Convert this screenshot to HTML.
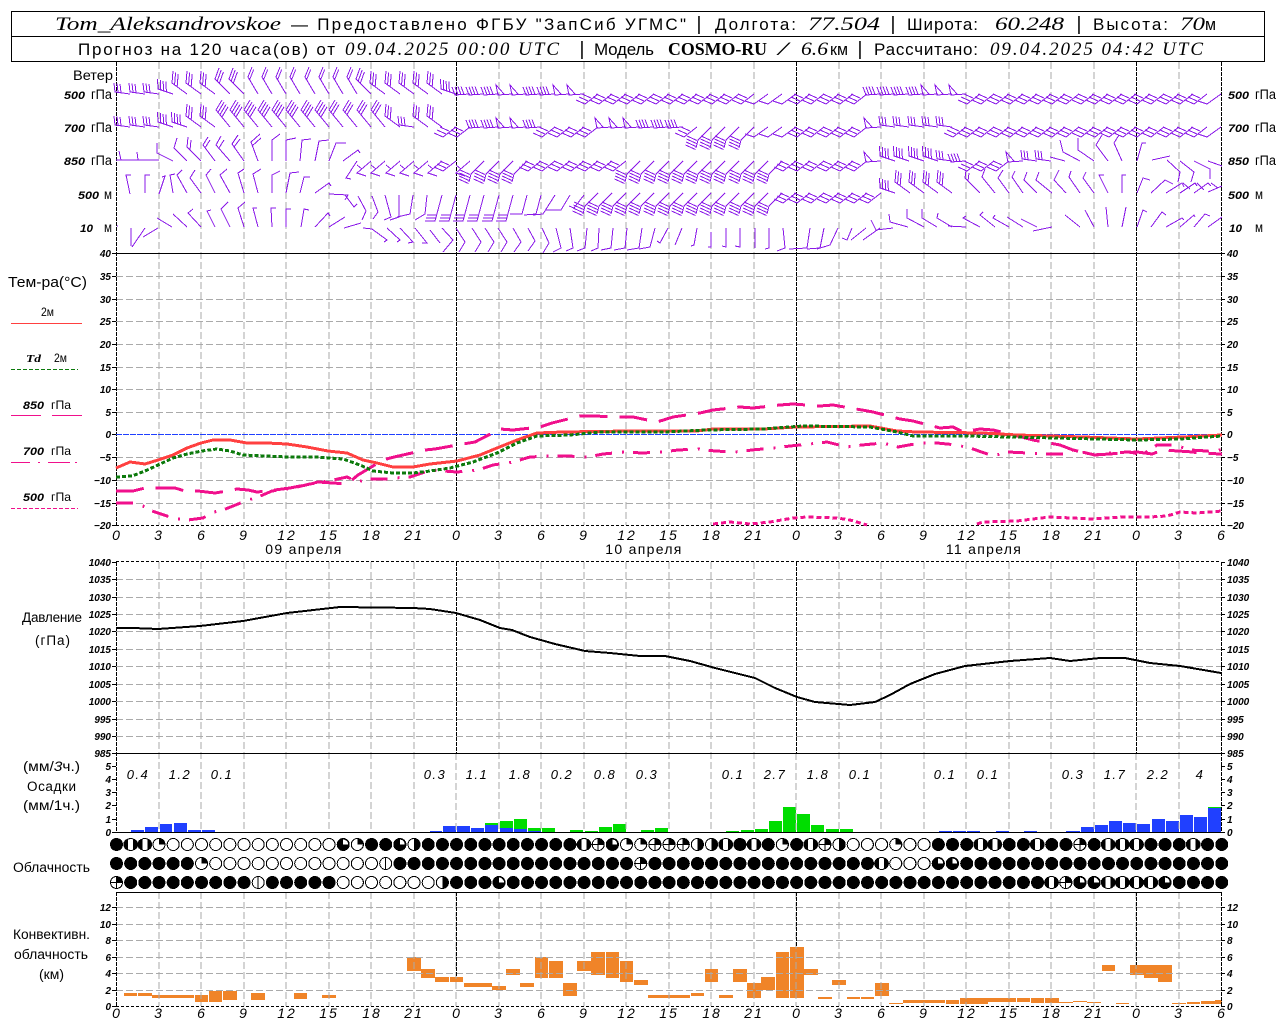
<!DOCTYPE html>
<html lang="ru"><head><meta charset="utf-8"><title>Tom_Aleksandrovskoe</title>
<style>
html,body{margin:0;padding:0;background:#fff}
svg{display:block}
text{font-family:"Liberation Sans","DejaVu Sans",sans-serif;fill:#000;stroke:none}
.h{font-size:17px}.hi{font-family:"Liberation Serif",serif;font-style:italic;font-size:19px}
.hb{font-family:"Liberation Serif",serif;font-weight:bold;font-size:18px}
.b{font-size:19px}
.l{font-size:13.5px}.li{font-size:11px;font-style:italic;font-weight:bold}
.n{font-size:10px;font-style:italic;font-weight:bold}
.e{text-anchor:end}
.x{font-size:14px;font-style:italic;text-anchor:middle;letter-spacing:2px}
.p{font-size:13px;font-style:italic;text-anchor:middle;letter-spacing:1.5px}
.d{font-size:14px;text-anchor:middle;letter-spacing:1.3px}
.w{fill:none;stroke:#8a18e8;stroke-width:1}
</style></head><body>
<svg width="1280" height="1024" viewBox="0 0 1280 1024" xmlns="http://www.w3.org/2000/svg" shape-rendering="crispEdges">
<defs>
<path id="A" d="M0 0L-15-2l-1-9m4 9.4l-1-9m4 9.4l-1-9"/>
<path id="B" d="M0 0L-15-5l-.5-10m3.3 10.9l-.5-10m3.3 10.9l-.5-10m3.3 10.9l-.5-10"/>
<path id="C" d="M0 0L-15-11l1-12m1.6 13.5l1-12m1.6 13.5l1-12"/>
<path id="D" d="M0 0L-15-15l4-11m-1.8 13l4-11m-1.8 13l4-11"/>
<path id="E" d="M0 0L-10-17l4-10m-2.3 12.500l4-10"/>
<path id="F" d="M0 0L-14-17l6-10m-4 12.300l6-10m-4 12.300l6-10m-4 12.300l6-10"/>
<path id="G" d="M0 0L-14-17l6-10m-4 12.300l6-10m-4 12.300l6-10"/>
<path id="H" d="M0 0L-15 1l-3-8m6 7.8l-3-8m6 7.8l-3-8m6 7.8l-3-8"/>
<path id="P" d="M0 0L-15 1l-2-10 8 9"/>
<path id="Y" d="M0 0L-13 10l-9-4m12 1l-9-4m12 1l-9-4"/>
<path id="y" d="M0 0L-14 10l-9-3"/>
<path id="Z" d="M0 0L-13 13l-2 8M-24 9l10 4.500M-24.500 12l10 4.500M-25 15l10 4.500M-25.500 18l10 4.500"/>
<path id="z" d="M0 0L-14 12l9 3M-9 8l-5-4"/>
<path id="W" d="M0 0L-7 26h-10M-6 23h-10M-5 20h-10"/>
<g id="ce"><circle r="6" fill="#fff" stroke="#000"/></g>
<g id="cq"><circle r="6" fill="#fff" stroke="#000"/><path d="M0 0V-6A6 6 0 0 1 6 0z" fill="#000"/></g>
<g id="ct"><circle r="6.5" fill="#000"/><path d="M0 0V-5A5 5 0 0 1 5 0z" fill="#fff"/></g>
<g id="cs"><circle r="6" fill="#fff" stroke="#000"/><path d="M-2.5-5.9A6 6 0 0 0-2.5 5.9zM2.5-5.9A6 6 0 0 1 2.5 5.9z" fill="#000"/></g>
<g id="cr"><circle r="6" fill="#fff" stroke="#000"/><path d="M0-6A6 6 0 0 1 0 6z" fill="#000"/></g>
<g id="cx"><circle r="6" fill="#fff" stroke="#000"/><path d="M0-6V6M-6 0H6" stroke="#000" fill="none"/><path d="M0 0V-6A6 6 0 0 1 6 0z" fill="#000"/></g>
<g id="cv"><circle r="6" fill="#fff" stroke="#000"/><path d="M0-6V6" stroke="#000"/></g>
</defs>

<!-- header -->
<path d="M11.5 11.5H1264.5V61.5H11.5ZM11.5 36.5H1264.5" fill="none" stroke="#000"/>
<text class="hi" x="55" y="30" textLength="226" lengthAdjust="spacingAndGlyphs">Tom_Aleksandrovskoe</text>
<text class="h" x="291" y="30" textLength="395" lengthAdjust="spacing">— Предоставлено ФГБУ "ЗапСиб УГМС"</text>
<text class="b" x="696.500" y="30">|</text>
<text class="h" x="715" y="30" textLength="81">Долгота:</text>
<text class="hi" x="808" y="30" textLength="72" lengthAdjust="spacingAndGlyphs">77.504</text>
<text class="b" x="890.500" y="30">|</text>
<text class="h" x="907" y="30" textLength="71">Широта:</text>
<text class="hi" x="995" y="30" textLength="69" lengthAdjust="spacingAndGlyphs">60.248</text>
<text class="b" x="1076.500" y="30">|</text>
<text class="h" x="1093" y="30" textLength="75">Высота:</text>
<text class="hi" x="1180" y="30" textLength="25" lengthAdjust="spacingAndGlyphs">70</text>
<text class="h" x="1205" y="30" textLength="11" lengthAdjust="spacingAndGlyphs">м</text>
<text class="h" x="78" y="55" textLength="257">Прогноз на 120 часа(ов) от</text>
<text class="hi" x="345" y="55" textLength="214" lengthAdjust="spacing">09.04.2025 00:00 UTC</text>
<text class="b" x="579.500" y="55">|</text>
<text class="h" x="594" y="55" textLength="60">Модель</text>
<text class="hb" x="668" y="55" textLength="99" lengthAdjust="spacingAndGlyphs">COSMO-RU</text>
<text class="hi" x="778" y="55" textLength="10" lengthAdjust="spacingAndGlyphs">/</text>
<text class="hi" x="801" y="55" textLength="27" lengthAdjust="spacingAndGlyphs">6.6</text>
<text class="h" x="830" y="55" textLength="18" lengthAdjust="spacingAndGlyphs">км</text>
<text class="b" x="857.500" y="55">|</text>
<text class="h" x="874" y="55" textLength="104">Рассчитано:</text>
<text class="hi" x="990" y="55" textLength="213" lengthAdjust="spacing">09.04.2025 04:42 UTC</text>

<!-- precip bars -->
<path fill="#2040ff" d="M131 830h13v2h-13zM145 827h13v5h-13zM160 824h12v8h-12zM174 823h13v9h-13zM188 830h13v2h-13zM202 830h13v2h-13zM430 831h12v1h-12zM443 826h13v6h-13zM457 826h13v6h-13zM471 828h13v4h-13zM485 825h13v7h-13zM500 828h13v4h-13zM514 829h13v3h-13zM528 831h13v1h-13zM939 831h13v1h-13zM953 831h13v1h-13zM967 831h13v1h-13zM996 831h13v1h-13zM1024 831h13v1h-13zM1066 831h14v1h-14zM1081 827h13v5h-13zM1095 825h13v7h-13zM1109 821h13v11h-13zM1123 823h13v9h-13zM1137 824h13v8h-13zM1152 819h13v13h-13zM1166 821h13v11h-13zM1180 815h13v17h-13zM1194 817h13v15h-13zM1208 808h13v24h-13z"/>
<path fill="#00dd00" d="M485 823h13v2h-13zM500 821h13v7h-13zM514 819h13v10h-13zM528 828h13v3h-13zM542 828h13v4h-13zM570 830h13v2h-13zM585 831h13v1h-13zM599 827h13v5h-13zM613 824h13v8h-13zM641 830h13v2h-13zM655 828h13v4h-13zM726 831h13v1h-13zM741 830h13v2h-13zM755 829h13v3h-13zM769 821h13v11h-13zM783 807h13v25h-13zM797 814h13v18h-13zM811 825h13v7h-13zM826 829h13v3h-13zM840 829h13v3h-13zM1208 807h13v1h-13z"/>

<!-- conv bars -->
<path fill="#f08428" d="M124 993h13v3h-13zM138 993h14v3h-14zM152 995h42v3h-42zM195 995h13v7h-13zM209 991h13v11h-13zM223 991h14v9h-14zM251 993h14v7h-14zM294 993h13v6h-13zM322 995h14v3h-14zM407 957h14v14h-14zM421 969h14v9h-14zM435 977h14v5h-14zM450 977h13v5h-13zM464 983h28v4h-28zM492 986h14v4h-14zM506 969h14v6h-14zM520 983h14v4h-14zM535 957h13v21h-13zM549 961h14v17h-14zM563 983h14v13h-14zM577 961h14v10h-14zM591 952h14v23h-14zM606 952h13v26h-13zM620 961h13v21h-13zM634 980h14v5h-14zM648 995h42v3h-42zM691 993h13v3h-13zM705 969h13v13h-13zM719 995h14v3h-14zM733 969h14v13h-14zM747 983h14v15h-14zM761 977h14v13h-14zM776 952h13v46h-13zM790 947h14v51h-14zM804 969h14v6h-14zM818 997h14v2h-14zM832 980h14v5h-14zM847 997h13v2h-13zM861 997h13v2h-13zM875 983h14v13h-14zM889 1003h14v1h-14zM903 1000h42v3h-42zM946 1000h13v4h-13zM960 998h28v6h-28zM988 998h28v4h-28zM1017 998h13v4h-13zM1031 998h13v5h-13zM1045 998h14v5h-14zM1059 1002h14v1h-14zM1073 1001h14v1h-14zM1087 1002h14v1h-14zM1102 965h13v6h-13zM1116 1003h13v1h-13zM1130 965h14v10h-14zM1144 965h14v13h-14zM1158 965h14v17h-14zM1172 1003h14v1h-14zM1187 1002h13v2h-13zM1201 1001h14v3h-14zM1215 1000h7v4h-7z"/>

<!-- gray grid -->
<g fill="none" stroke="#aaa" stroke-dasharray="7 3">
<path d="M159 62V525M201 62V525M244 62V525M286 62V525M329 62V525M371 62V525M414 62V525M499 62V525M541 62V525M584 62V525M626 62V525M669 62V525M711 62V525M754 62V525M839 62V525M881 62V525M924 62V525M966 62V525M1009 62V525M1051 62V525M1094 62V525M1179 62V525"/>
<path d="M159 562V832M201 562V832M244 562V832M286 562V832M329 562V832M371 562V832M414 562V832M456 753V832M499 562V832M541 562V832M584 562V832M626 562V832M669 562V832M711 562V832M754 562V832M796 753V832M839 562V832M881 562V832M924 562V832M966 562V832M1009 562V832M1051 562V832M1094 562V832M1136 753V832M1179 562V832"/>
<path d="M159 892V1006M201 892V1006M244 892V1006M286 892V1006M329 892V1006M371 892V1006M414 892V1006M456 892V1006M499 892V1006M541 892V1006M584 892V1006M626 892V1006M669 892V1006M711 892V1006M754 892V1006M796 892V1006M839 892V1006M881 892V1006M924 892V1006M966 892V1006M1009 892V1006M1051 892V1006M1094 892V1006M1136 892V1006M1179 892V1006"/>
<path d="M116 276.500H1221M116 299.500H1221M116 321.500H1221M116 344.500H1221M116 367.500H1221M116 389.500H1221M116 412.500H1221M116 457.500H1221M116 480.500H1221M116 503.500H1221"/>
<path d="M116 579.500H1221M116 597.500H1221M116 614.500H1221M116 631.500H1221M116 649.500H1221M116 666.500H1221M116 684.500H1221M116 701.500H1221M116 719.500H1221M116 736.500H1221"/>
<path d="M116 907.500H1221M116 924.500H1221M116 940.500H1221M116 957.500H1221M116 973.500H1221M116 990.500H1221"/>
</g>

<!-- black axes -->
<g fill="none" stroke="#000">
<path stroke-dasharray="4 1" d="M116.500 62V525M1221.500 62V525M116.500 562V832M1221.500 562V832M116.500 892V1006M1221.500 892V1006M456.500 62V525M796.500 62V525M1136.500 62V525M456.500 562V753M796.500 562V753M1136.500 562V753M456.500 892V977M796.500 892V947M1136.500 892V965"/>
<path d="M116 253.500H1221M116 753.500H1221M116 832.500H1221M116 892.500H1221"/>
<path stroke-dasharray="3 2" d="M116 525.500H1221M116 561.500H1221M116 1006.500H1221"/>
<path d="M112 253.500h4M112 276.500h4M112 299.500h4M112 321.500h4M112 344.500h4M112 367.500h4M112 389.500h4M112 412.500h4M112 434.500h4M112 457.500h4M112 480.500h4M112 503.500h4M112 525.500h4M112 562.500h4M112 579.500h4M112 597.500h4M112 614.500h4M112 631.500h4M112 649.500h4M112 666.500h4M112 684.500h4M112 701.500h4M112 719.500h4M112 736.500h4M112 753.500h4M112 766.500h4M112 779.500h4M112 792.500h4M112 805.500h4M112 819.500h4M112 832.500h4M112 907.500h4M112 924.500h4M112 940.500h4M112 957.500h4M112 973.500h4M112 990.500h4M112 1006.500h4"/>
<path d="M1221 253.500h4M1221 276.500h4M1221 299.500h4M1221 321.500h4M1221 344.500h4M1221 367.500h4M1221 389.500h4M1221 412.500h4M1221 434.500h4M1221 457.500h4M1221 480.500h4M1221 503.500h4M1221 525.500h4M1221 562.500h4M1221 579.500h4M1221 597.500h4M1221 614.500h4M1221 631.500h4M1221 649.500h4M1221 666.500h4M1221 684.500h4M1221 701.500h4M1221 719.500h4M1221 736.500h4M1221 753.500h4M1221 766.500h4M1221 779.500h4M1221 792.500h4M1221 805.500h4M1221 819.500h4M1221 832.500h4M1221 907.500h4M1221 924.500h4M1221 940.500h4M1221 957.500h4M1221 973.500h4M1221 990.500h4M1221 1006.500h4"/>
</g>
<path d="M116 434.500H1221" stroke="#2040ff" stroke-dasharray="6 1" fill="none"/>

<!-- wind barbs -->
<g class="w">
<g transform="translate(0,94)">
<use href="#A" x="130"/><use href="#A" x="145"/><use href="#A" x="159"/><use href="#B" x="173"/><use href="#C" x="187"/><use href="#C" x="201"/><use href="#C" x="215"/><use href="#D" x="230"/><use href="#D" x="244"/><use href="#E" x="258"/><use href="#E" x="272"/><use href="#E" x="286"/><use href="#E" x="300"/><use href="#E" x="315"/><use href="#E" x="329"/><use href="#E" x="343"/><use href="#E" x="357"/><use href="#D" x="371"/><use href="#C" x="385"/><use href="#C" x="400"/><use href="#C" x="414"/><use href="#C" x="428"/><use href="#C" x="442"/><use href="#B" x="456"/><use href="#H" x="470"/><use href="#H" x="484"/><use href="#H" x="499"/><use href="#P" x="513"/><use href="#P" x="527"/><use href="#H" x="541"/><use href="#H" x="555"/><use href="#P" x="570"/><use href="#P" x="584"/>
<use href="#Y" x="598"/><use href="#Y" x="612"/><use href="#Y" x="626"/><use href="#Y" x="640"/><use href="#Y" x="654"/><use href="#Y" x="669"/><use href="#Y" x="683"/><use href="#Y" x="697"/><use href="#Y" x="711"/><use href="#Y" x="725"/><use href="#Y" x="739"/><use href="#Y" x="754"/><use href="#y" x="768"/><use href="#y" x="782"/><use href="#y" x="796"/><use href="#Y" x="810"/><use href="#Y" x="824"/><use href="#Y" x="839"/><use href="#Y" x="853"/><use href="#Y" x="867"/><use href="#H" x="881"/><use href="#H" x="895"/><use href="#H" x="909"/><use href="#H" x="924"/><use href="#P" x="938"/><use href="#P" x="952"/><use href="#P" x="966"/>
<use href="#Y" x="980"/><use href="#Y" x="994"/><use href="#Y" x="1009"/><use href="#Y" x="1023"/><use href="#Y" x="1037"/><use href="#Y" x="1051"/><use href="#Y" x="1065"/><use href="#Y" x="1079"/><use href="#Y" x="1094"/><use href="#Y" x="1108"/><use href="#Y" x="1122"/><use href="#Y" x="1136"/><use href="#Y" x="1150"/><use href="#Y" x="1164"/><use href="#Y" x="1179"/><use href="#Y" x="1193"/><use href="#Y" x="1207"/><use href="#y" x="1221"/>
</g>
<g transform="translate(0,127)">
<use href="#A" x="130"/><use href="#A" x="145"/><use href="#A" x="159"/><use href="#B" x="173"/><use href="#B" x="187"/><use href="#C" x="201"/><use href="#C" x="215"/><use href="#F" x="230"/><use href="#F" x="244"/><use href="#F" x="258"/><use href="#F" x="272"/><use href="#F" x="286"/><use href="#F" x="300"/><use href="#F" x="315"/><use href="#F" x="329"/><use href="#G" x="343"/><use href="#G" x="357"/><use href="#G" x="371"/><use href="#G" x="385"/><use href="#C" x="400"/><use href="#A" x="414"/><use href="#C" x="428"/><use href="#C" x="442"/><use href="#Y" x="456"/><use href="#Y" x="470"/><use href="#H" x="484"/><use href="#H" x="499"/><use href="#P" x="513"/><use href="#P" x="527"/><use href="#H" x="541"/><use href="#Y" x="555"/><use href="#Y" x="570"/><use href="#Y" x="584"/><use href="#Y" x="598"/><use href="#P" x="612"/><use href="#P" x="626"/><use href="#P" x="640"/><use href="#H" x="654"/><use href="#H" x="669"/><use href="#H" x="683"/><use href="#Y" x="697"/><use href="#Z" x="711"/><use href="#Z" x="725"/><use href="#Z" x="739"/><use href="#Z" x="754"/><use href="#y" x="768"/><use href="#y" x="782"/><use href="#y" x="796"/>
<use href="#Y" x="810"/><use href="#Y" x="824"/><use href="#Y" x="839"/><use href="#Y" x="853"/><use href="#Y" x="867"/><use href="#P" x="881"/><use href="#A" x="895"/><use href="#A" x="909"/><use href="#A" x="924"/><use href="#A" x="938"/><use href="#A" x="952"/><use href="#Y" x="966"/><use href="#Y" x="980"/><use href="#Y" x="994"/><use href="#Y" x="1009"/><use href="#Y" x="1023"/><use href="#Y" x="1037"/><use href="#Y" x="1051"/><use href="#Y" x="1065"/><use href="#Y" x="1079"/><use href="#Y" x="1094"/><use href="#Y" x="1108"/><use href="#Y" x="1122"/><use href="#Y" x="1136"/><use href="#Y" x="1150"/><use href="#Y" x="1164"/><use href="#Y" x="1179"/><use href="#Y" x="1193"/><use href="#Y" x="1207"/><use href="#y" x="1221"/>
</g>
<g transform="translate(0,161)">
<use href="#z" x="371"/><use href="#z" x="385"/><use href="#z" x="400"/><use href="#z" x="414"/><use href="#z" x="428"/><use href="#z" x="442"/><use href="#Y" x="456"/><use href="#z" x="470"/><use href="#Z" x="484"/><use href="#Z" x="499"/><use href="#Z" x="513"/><use href="#Z" x="527"/><use href="#Y" x="541"/><use href="#Y" x="555"/><use href="#Y" x="570"/><use href="#Y" x="584"/><use href="#Y" x="598"/><use href="#Y" x="612"/><use href="#Y" x="626"/><use href="#Z" x="640"/><use href="#Z" x="654"/><use href="#Z" x="669"/><use href="#Z" x="683"/><use href="#Z" x="697"/><use href="#Z" x="711"/><use href="#Z" x="725"/><use href="#Z" x="739"/><use href="#Z" x="754"/><use href="#Z" x="768"/><use href="#Z" x="782"/><use href="#Y" x="796"/><use href="#Y" x="810"/><use href="#Y" x="824"/><use href="#Y" x="839"/><use href="#Y" x="853"/><use href="#Y" x="867"/><use href="#P" x="881"/><use href="#B" x="895"/><use href="#B" x="909"/><use href="#B" x="924"/><use href="#B" x="938"/><use href="#A" x="952"/><use href="#H" x="966"/><use href="#Y" x="980"/><use href="#Y" x="994"/><use href="#Y" x="1009"/><use href="#P" x="1023"/><use href="#A" x="1037"/><use href="#A" x="1051"/>
</g>
<path d="M130 160l-14 0M121 160l-2-9M145 160l-15 0M138 160l-1-8M159 160H137M173 161L157 153V143M187 161L174 148l3-10M201 161L187 147l1-10M190 150l1-10M215 161L203 145l5-8M205 148l5-8M230 161L216 145l5-9M219 148l5-8M244 161L232 144l6-9M234 147l6-8M258 161L251 142l9-8M252 146l9-8M272 161V140l8-6M286 161V140l10-2M300 161L302 140l9-1M315 161L319 141l10-1M329 161L336 143h10M343 161L358 150l2 3M357 161L346 178l5 1M1065 161L1050 157M1080 161L1063 152l-3-12M1094 161L1078 150v-12M1108 161L1096 145l6-10M1122 161L1114 143l5-8M1137 161L1142 143l4 0M1152 160l18-4M1167 160l13 12-2 10M1180 161l14 11-3 10M1194 161l16 8v10M1208 161l14 5"/>
<g transform="translate(0,195)">
<use href="#W" x="442"/><use href="#W" x="456"/><use href="#W" x="470"/><use href="#W" x="484"/><use href="#W" x="499"/><use href="#W" x="513"/>
</g>
<g transform="translate(0,193)">
<use href="#Z" x="598"/><use href="#Z" x="612"/><use href="#Z" x="626"/><use href="#Z" x="640"/><use href="#Z" x="654"/><use href="#Z" x="669"/><use href="#Z" x="683"/><use href="#Z" x="697"/><use href="#Z" x="711"/><use href="#Z" x="725"/><use href="#Z" x="739"/><use href="#Z" x="754"/><use href="#Z" x="768"/><use href="#Z" x="782"/><use href="#Y" x="796"/><use href="#Y" x="810"/><use href="#Y" x="824"/><use href="#Y" x="839"/><use href="#Y" x="853"/><use href="#Y" x="867"/><use href="#Y" x="881"/><use href="#B" x="895"/><use href="#C" x="910"/><use href="#C" x="924"/><use href="#C" x="938"/><use href="#C" x="952"/>
</g>
<path d="M130 194l-4-19h5M145 193V175h5M159 194l6-18-3 1M173 193l-3-18 5-1M187 193L177 175l5-5M201 193L190 178l5-8M215 193L206 175l5-6M230 193L220 175l7-6M244 193L238 173l6-4M258 193L253 174l8-5M272 193V175l8-4M286 193L290 173l9-1M300 193L304 177h6M315 193L329 183l2 3M329 194L348 195l-3 5M345 195l9 12 3-3M358 196l8 15-4 9M372 196l6 16-5 7M385 195l6 22-7 3M399 195V217l-9 3M413 195l-3 19-13 3M427 195l-2 19-10 6M527 195l-5 19-12 0M541 195l-5 19-12 1M555 195l-12 19-10 1M570 195l-9 15-15 0M584 195l-10 13-5-2M980 193L965 178l1-8M968 181l1-8M995 193L982 177l3-8M1009 193L998 178l5-8M1023 193L1012 177l3-6M1037 193L1024 180l3-8M1052 193L1036 180l3-8M1066 193L1054 180l5-10M1080 193L1069 177l2-6M1094 193L1083 178l3-6M1108 193L1099 175l5 0M1122 193V175h4M1137 193L1143 178l7 2M1151 193L1165 180l8 4M1166 193L1182 183l2 4M1180 193L1195 183l2 3M1194 193L1208 183l3 3M1208 192L1222 186M1183 183l7 6M1197 183l7 7M1211 183l7 5"/>
<path d="M117 226h1M131 228V246M145 228L132 247M158 228L143 237M172 227L157 218M187 227L173 214M201 227L188 213l5-4M215 227L207 211l4-1M230 227L221 209l7-7M244 227L238 208l7-6M258 227L253 208h4M272 227L271 208h5M286 227V209h5M301 227L304 209l5 1M315 227L328 213l2 3M329 227L345 217M344 228L361 223M363 228L372 229M372 229l15 11-3 2M387 228l13 12-3 2M400 228l13 14-5 1M415 228l12 15-5 0M430 230l10 13M442 228l11 12-10 12M456 228l9 14-6 10M472 228l9 14-6 10M485 228l9 14-6 10M498 228l9 14-6 10M513 228l8 14-7 10M528 228l7 13-7 10M542 228l7 15-6 10M556 228l5 20-8 4M570 228l3 20-7 3M587 228l-2 20-8 3M599 228l-1 20-7 3M613 228l-2 20-10 2M627 228l-2 20-11 2M642 228l-3 20-12 2M655 228l-5 19-11 2M668 228l-8 15-3-2M682 228l-7 17M697 228l-3 17-3 1M711 232v15l-3 0M726 228v19l-4-1M740 228v19l-5-1M755 228v20M769 228v20l-4 1M783 228l2 20-8 3M810 228l-3 20-18 1M824 228l-4 20-13 1M838 228l-8 17-13 4M852 228l-5 12-5-2M866 228l-15 12M880 228l-17 12M893 228l-17 2-5-10M908 227l-18-5-1-8M924 227L907 218l0-9M937 227L922 218v-9M952 227L937 218l1-5M966 227L948 226M980 227L963 218l3-2M995 227L980 215l3-3M1009 227L993 218l2-3M1023 227L1007 217M1037 227L1021 219M1052 227L1033 231M1080 227L1065 215M1094 227L1085 210M1108 227L1106 207M1122 227L1126 207M1137 227L1143 210l4 2M1151 227L1162 212l4 3M1166 227L1182 218l2 2M1180 227L1194 215l1 2M1194 227L1205 214l5 2M1208 227L1222 217"/>
</g>

<!-- temperature curves -->
<g fill="none" stroke-width="3">
<polyline stroke="#f0108c" stroke-dasharray="28 12" points="116,491 133,491 145,488 157,488 175,488 185,491 198,491 215,493 227,491 237,489 248,490 257,492 267,491 290,488 310,484 318,482 333,483 347,484 358,475 383,460 394,457 425,450 435,449 463,444 475,442 500,429 513,430 540,427 552,423 580,416 593,416 620,417 633,417 657,422 673,417 700,413 713,410 740,407 753,408 780,405 793,404 820,406 833,405 850,408 862,410 873,412 900,419 913,421 940,428 953,427 963,432 980,429 993,430 1010,434 1033,440 1060,445 1073,450 1095,455 1137,452 1152,454 1163,450 1193,452 1197,453 1222,454"/>
<polyline stroke="#f0108c" stroke-dasharray="17 10 2 9" points="116,503 133,503 143,506 152,511 167,516 178,519 188,520 203,518 214,512 223,510 238,504 248,500 258,497 272,491 293,488 310,484 333,480 347,477 358,482 367,479 385,479 395,478 410,477 422,473 430,470 457,472 478,470 493,465 513,462 530,457 550,456 567,456 588,457 603,454 625,452 642,453 662,452 678,450 698,449 715,451 735,452 752,450 773,448 790,446 810,444 827,442 847,447 862,445 883,443 898,447 920,443 937,443 957,445 973,449 993,456 1008,452 1028,453 1047,454 1067,454 1073,450 1095,455 1107,453 1130,452 1142,455 1157,445 1175,445 1190,450 1207,451 1222,450"/>
<polyline stroke="#f0108c" stroke-dasharray="5 3" points="713,524 730,522 750,524 770,522 793,518 807,517 837,518 850,520 867,525"/>
<polyline stroke="#f0108c" stroke-dasharray="5 3" points="977,524 983,522 1017,521 1033,519 1050,517 1093,519 1123,517 1150,517 1167,516 1180,512 1197,513 1222,511"/>
<polyline stroke="#ff4040" points="116,468 130,462 145,464 158,460 173,455 187,448 201,443 213,440 230,440 247,443 267,443 287,444 307,447 328,451 347,453 363,460 377,463 393,467 413,467 430,464 457,461 480,455 497,448 517,440 537,433 563,432 630,431 697,431 713,429 763,429 797,427 870,426 897,431 917,432 983,433 1017,435 1083,437 1137,439 1183,437 1222,435"/>
<polyline stroke="#0c7a0c" stroke-dasharray="4 2" points="116,477 132,476 145,471 158,465 173,458 187,454 202,451 217,449 230,451 243,455 267,456 287,457 317,457 343,459 360,465 373,471 393,473 413,473 430,471 450,468 473,462 497,453 517,443 537,436 570,435 600,432 663,432 707,430 763,429 803,426 870,427 897,432 913,436 967,436 1010,437 1057,438 1137,440 1180,439 1222,436"/>
<!-- pressure -->
<polyline stroke="#000" stroke-width="2" points="116,628 133,628 158,629 200,626 243,621 287,613 340,607 413,608 430,609 456,613 480,620 500,628 512,630 530,637 555,644 585,651 610,653 640,656 665,656 690,661 715,668 755,678 775,688 797,697 815,702 850,705 875,702 890,695 910,684 935,674 965,666 1010,661 1050,658 1070,661 1100,658 1125,658 1150,663 1180,666 1221,673"/>
</g>

<!-- legend lines -->
<g fill="none">
<path stroke="#ff4040" d="M11 323.500H82"/>
<path stroke="#0c7a0c" stroke-dasharray="4 2" d="M11 369.500H78"/>
<path stroke="#f0108c" d="M11 415.500H41M52 415.500H82M11 462.500H30M38 462.500H40M48 462.500H70M75 462.500H77"/>
<path stroke="#f0108c" stroke-dasharray="4 2" d="M11 508.500H78"/>
</g>

<!-- clouds -->
<path d="M116.500 844.500H1222M116.500 863.500H1222M116.500 882.500H1222" fill="none" stroke="#000" stroke-width="13" stroke-linecap="round" stroke-dasharray="0 14.17"/>
<g transform="translate(0,844.5)">
<use href="#cs" x="130.700"/><use href="#cs" x="144.800"/><use href="#cq" x="159"/><use href="#ce" x="173.200"/><use href="#ce" x="187.300"/><use href="#ce" x="201.500"/><use href="#ce" x="215.700"/><use href="#ce" x="229.800"/><use href="#ce" x="244"/><use href="#ce" x="258.200"/><use href="#ce" x="272.300"/><use href="#ce" x="286.500"/><use href="#ce" x="300.700"/><use href="#ce" x="314.800"/><use href="#ce" x="329"/><use href="#ct" x="343.200"/><use href="#cq" x="357.300"/><use href="#ct" x="399.800"/><use href="#cr" x="414"/><use href="#cs" x="584"/><use href="#cx" x="598.200"/><use href="#ct" x="612.300"/><use href="#cq" x="626.500"/><use href="#cq" x="640.700"/><use href="#cx" x="654.800"/><use href="#cx" x="669"/><use href="#cx" x="683.200"/><use href="#cr" x="697.300"/><use href="#cr" x="711.500"/><use href="#cs" x="725.700"/><use href="#cs" x="754"/><use href="#cq" x="782.300"/><use href="#cs" x="810.700"/><use href="#cx" x="824.800"/><use href="#cr" x="839"/><use href="#ce" x="853.200"/><use href="#ce" x="867.300"/><use href="#ce" x="881.500"/><use href="#cq" x="895.700"/><use href="#ce" x="909.800"/><use href="#ce" x="924"/><use href="#cs" x="980.700"/><use href="#cs" x="994.800"/><use href="#cs" x="1037.300"/><use href="#cx" x="1079.800"/><use href="#cs" x="1108.200"/><use href="#cs" x="1122.300"/><use href="#cs" x="1136.500"/><use href="#cs" x="1193.200"/>
</g>
<g transform="translate(0,863.5)">
<use href="#cq" x="201.500"/><use href="#ce" x="215.700"/><use href="#ce" x="229.800"/><use href="#ce" x="244"/><use href="#ce" x="258.200"/><use href="#ce" x="272.300"/><use href="#ce" x="286.500"/><use href="#ce" x="300.700"/><use href="#ce" x="314.800"/><use href="#ce" x="329"/><use href="#ce" x="343.200"/><use href="#ce" x="357.300"/><use href="#ce" x="371.500"/><use href="#cv" x="385.700"/><use href="#cx" x="640.700"/><use href="#cs" x="881.500"/><use href="#ce" x="895.700"/><use href="#ce" x="909.800"/><use href="#ce" x="924"/><use href="#ct" x="938.200"/><use href="#ct" x="952.300"/>
</g>
<g transform="translate(0,882.5)">
<use href="#cx" x="116.500"/><use href="#cv" x="258.200"/><use href="#ce" x="343.200"/><use href="#ce" x="357.300"/><use href="#ce" x="371.500"/><use href="#ce" x="385.700"/><use href="#ce" x="399.800"/><use href="#ce" x="414"/><use href="#ce" x="428.200"/><use href="#cr" x="442.300"/><use href="#ct" x="499"/><use href="#cs" x="1051.500"/><use href="#cx" x="1065.700"/><use href="#ct" x="1079.800"/><use href="#ct" x="1094"/><use href="#cs" x="1108.200"/><use href="#cs" x="1122.300"/><use href="#cs" x="1136.500"/><use href="#cs" x="1150.700"/><use href="#ct" x="1164.800"/>
</g>

<!-- left labels -->
<text class="l" x="73" y="80" textLength="40" lengthAdjust="spacingAndGlyphs">Ветер</text>
<text class="li" x="64" y="99" textLength="21" lengthAdjust="spacingAndGlyphs">500</text><text class="l" x="91" y="99" textLength="21" lengthAdjust="spacingAndGlyphs">гПа</text>
<text class="li" x="64" y="132" textLength="21" lengthAdjust="spacingAndGlyphs">700</text><text class="l" x="91" y="132" textLength="21" lengthAdjust="spacingAndGlyphs">гПа</text>
<text class="li" x="64" y="165" textLength="21" lengthAdjust="spacingAndGlyphs">850</text><text class="l" x="91" y="165" textLength="21" lengthAdjust="spacingAndGlyphs">гПа</text>
<text class="li" x="78" y="199" textLength="21" lengthAdjust="spacingAndGlyphs">500</text><text class="l" x="104" y="199" textLength="8" lengthAdjust="spacingAndGlyphs">м</text>
<text class="li" x="80" y="232" textLength="13" lengthAdjust="spacingAndGlyphs">10</text><text class="l" x="104" y="232" textLength="8" lengthAdjust="spacingAndGlyphs">м</text>
<text class="li" x="1228" y="99" textLength="21" lengthAdjust="spacingAndGlyphs">500</text><text class="l" x="1255" y="99" textLength="21" lengthAdjust="spacingAndGlyphs">гПа</text>
<text class="li" x="1228" y="132" textLength="21" lengthAdjust="spacingAndGlyphs">700</text><text class="l" x="1255" y="132" textLength="21" lengthAdjust="spacingAndGlyphs">гПа</text>
<text class="li" x="1228" y="165" textLength="21" lengthAdjust="spacingAndGlyphs">850</text><text class="l" x="1255" y="165" textLength="21" lengthAdjust="spacingAndGlyphs">гПа</text>
<text class="li" x="1228" y="199" textLength="21" lengthAdjust="spacingAndGlyphs">500</text><text class="l" x="1255" y="199" textLength="8" lengthAdjust="spacingAndGlyphs">м</text>
<text class="li" x="1229" y="232" textLength="13" lengthAdjust="spacingAndGlyphs">10</text><text class="l" x="1255" y="232" textLength="8" lengthAdjust="spacingAndGlyphs">м</text>
<text class="l" x="8" y="287" textLength="79" lengthAdjust="spacingAndGlyphs" style="font-size:15px">Тем-ра(°C)</text>
<text class="l" x="41" y="316" textLength="13" lengthAdjust="spacingAndGlyphs" style="font-size:12px">2м</text>
<text class="li" x="26" y="362" textLength="15" lengthAdjust="spacingAndGlyphs" style="font-family:'Liberation Serif',serif">Td</text><text class="l" x="54" y="362" textLength="13" lengthAdjust="spacingAndGlyphs" style="font-size:12px">2м</text>
<text class="li" x="23" y="409" textLength="21" lengthAdjust="spacingAndGlyphs">850</text><text class="l" x="51" y="409" textLength="20" lengthAdjust="spacingAndGlyphs" style="font-size:12px">гПа</text>
<text class="li" x="23" y="455" textLength="21" lengthAdjust="spacingAndGlyphs">700</text><text class="l" x="51" y="455" textLength="20" lengthAdjust="spacingAndGlyphs" style="font-size:12px">гПа</text>
<text class="li" x="23" y="501" textLength="21" lengthAdjust="spacingAndGlyphs">500</text><text class="l" x="51" y="501" textLength="20" lengthAdjust="spacingAndGlyphs" style="font-size:12px">гПа</text>
<text class="l" x="22" y="622" textLength="60">Давление</text>
<text class="l" x="35" y="645" textLength="35">(гПа)</text>
<text class="l" x="23" y="771" textLength="57" lengthAdjust="spacingAndGlyphs">(мм/<tspan style="font-style:italic">3</tspan>ч.)</text>
<text class="l" x="27" y="791" textLength="49">Осадки</text>
<text class="l" x="23" y="810" textLength="57" lengthAdjust="spacingAndGlyphs">(мм/1ч.)</text>
<text class="l" x="13" y="872" textLength="77" lengthAdjust="spacingAndGlyphs">Облачность</text>
<text class="l" x="13" y="939" textLength="77" lengthAdjust="spacingAndGlyphs">Конвективн.</text>
<text class="l" x="14" y="959" textLength="74" lengthAdjust="spacingAndGlyphs">облачность</text>
<text class="l" x="39" y="979" textLength="25" lengthAdjust="spacingAndGlyphs">(км)</text>

<!-- y ticks -->
<g class="n e">
<text x="111" y="257">40</text><text x="111" y="280">35</text><text x="111" y="303">30</text><text x="111" y="325">25</text><text x="111" y="348">20</text><text x="111" y="371">15</text><text x="111" y="393">10</text><text x="111" y="416">5</text><text x="111" y="438">0</text><text x="111" y="461">−5</text><text x="111" y="484">−10</text><text x="111" y="507">−15</text><text x="111" y="529">−20</text>
<text x="111" y="566">1040</text><text x="111" y="583">1035</text><text x="111" y="601">1030</text><text x="111" y="618">1025</text><text x="111" y="635">1020</text><text x="111" y="653">1015</text><text x="111" y="670">1010</text><text x="111" y="688">1005</text><text x="111" y="705">1000</text><text x="111" y="723">995</text><text x="111" y="740">990</text><text x="111" y="757">985</text>
<text x="111" y="770">5</text><text x="111" y="783">4</text><text x="111" y="796">3</text><text x="111" y="809">2</text><text x="111" y="823">1</text><text x="111" y="836">0</text>
<text x="111" y="911">12</text><text x="111" y="928">10</text><text x="111" y="944">8</text><text x="111" y="961">6</text><text x="111" y="977">4</text><text x="111" y="994">2</text><text x="111" y="1010">0</text>
</g>
<g class="n">
<text x="1227" y="257">40</text><text x="1227" y="280">35</text><text x="1227" y="303">30</text><text x="1227" y="325">25</text><text x="1227" y="348">20</text><text x="1227" y="371">15</text><text x="1227" y="393">10</text><text x="1227" y="416">5</text><text x="1227" y="438">0</text><text x="1227" y="461">−5</text><text x="1227" y="484">−10</text><text x="1227" y="507">−15</text><text x="1227" y="529">−20</text>
<text x="1227" y="566">1040</text><text x="1227" y="583">1035</text><text x="1227" y="601">1030</text><text x="1227" y="618">1025</text><text x="1227" y="635">1020</text><text x="1227" y="653">1015</text><text x="1227" y="670">1010</text><text x="1227" y="688">1005</text><text x="1227" y="705">1000</text><text x="1227" y="723">995</text><text x="1227" y="740">990</text><text x="1227" y="757">985</text>
<text x="1227" y="770">5</text><text x="1227" y="783">4</text><text x="1227" y="796">3</text><text x="1227" y="809">2</text><text x="1227" y="823">1</text><text x="1227" y="836">0</text>
<text x="1227" y="911">12</text><text x="1227" y="928">10</text><text x="1227" y="944">8</text><text x="1227" y="961">6</text><text x="1227" y="977">4</text><text x="1227" y="994">2</text><text x="1227" y="1010">0</text>
</g>

<!-- x labels -->
<g class="x">
<text x="117" y="540">0</text><text x="159" y="540">3</text><text x="202" y="540">6</text><text x="244" y="540">9</text><text x="287" y="540">12</text><text x="329" y="540">15</text><text x="372" y="540">18</text><text x="414" y="540">21</text><text x="457" y="540">0</text><text x="499" y="540">3</text><text x="542" y="540">6</text><text x="584" y="540">9</text><text x="627" y="540">12</text><text x="669" y="540">15</text><text x="712" y="540">18</text><text x="754" y="540">21</text><text x="797" y="540">0</text><text x="839" y="540">3</text><text x="882" y="540">6</text><text x="924" y="540">9</text><text x="967" y="540">12</text><text x="1009" y="540">15</text><text x="1052" y="540">18</text><text x="1094" y="540">21</text><text x="1137" y="540">0</text><text x="1179" y="540">3</text><text x="1222" y="540">6</text>
<text x="117" y="1018">0</text><text x="159" y="1018">3</text><text x="202" y="1018">6</text><text x="244" y="1018">9</text><text x="287" y="1018">12</text><text x="329" y="1018">15</text><text x="372" y="1018">18</text><text x="414" y="1018">21</text><text x="457" y="1018">0</text><text x="499" y="1018">3</text><text x="542" y="1018">6</text><text x="584" y="1018">9</text><text x="627" y="1018">12</text><text x="669" y="1018">15</text><text x="712" y="1018">18</text><text x="754" y="1018">21</text><text x="797" y="1018">0</text><text x="839" y="1018">3</text><text x="882" y="1018">6</text><text x="924" y="1018">9</text><text x="967" y="1018">12</text><text x="1009" y="1018">15</text><text x="1052" y="1018">18</text><text x="1094" y="1018">21</text><text x="1137" y="1018">0</text><text x="1179" y="1018">3</text><text x="1222" y="1018">6</text>
</g>
<text class="d" x="304" y="554">09 апреля</text>
<text class="d" x="644" y="554">10 апреля</text>
<text class="d" x="984" y="554">11 апреля</text>

<!-- precip values -->
<g class="p">
<text x="138" y="779">0.4</text><text x="180" y="779">1.2</text><text x="222" y="779">0.1</text><text x="435" y="779">0.3</text><text x="477" y="779">1.1</text><text x="520" y="779">1.8</text><text x="562" y="779">0.2</text><text x="605" y="779">0.8</text><text x="647" y="779">0.3</text><text x="733" y="779">0.1</text><text x="775" y="779">2.7</text><text x="818" y="779">1.8</text><text x="860" y="779">0.1</text><text x="945" y="779">0.1</text><text x="988" y="779">0.1</text><text x="1073" y="779">0.3</text><text x="1115" y="779">1.7</text><text x="1158" y="779">2.2</text><text x="1200" y="779">4</text>
</g>
</svg>
</body></html>
